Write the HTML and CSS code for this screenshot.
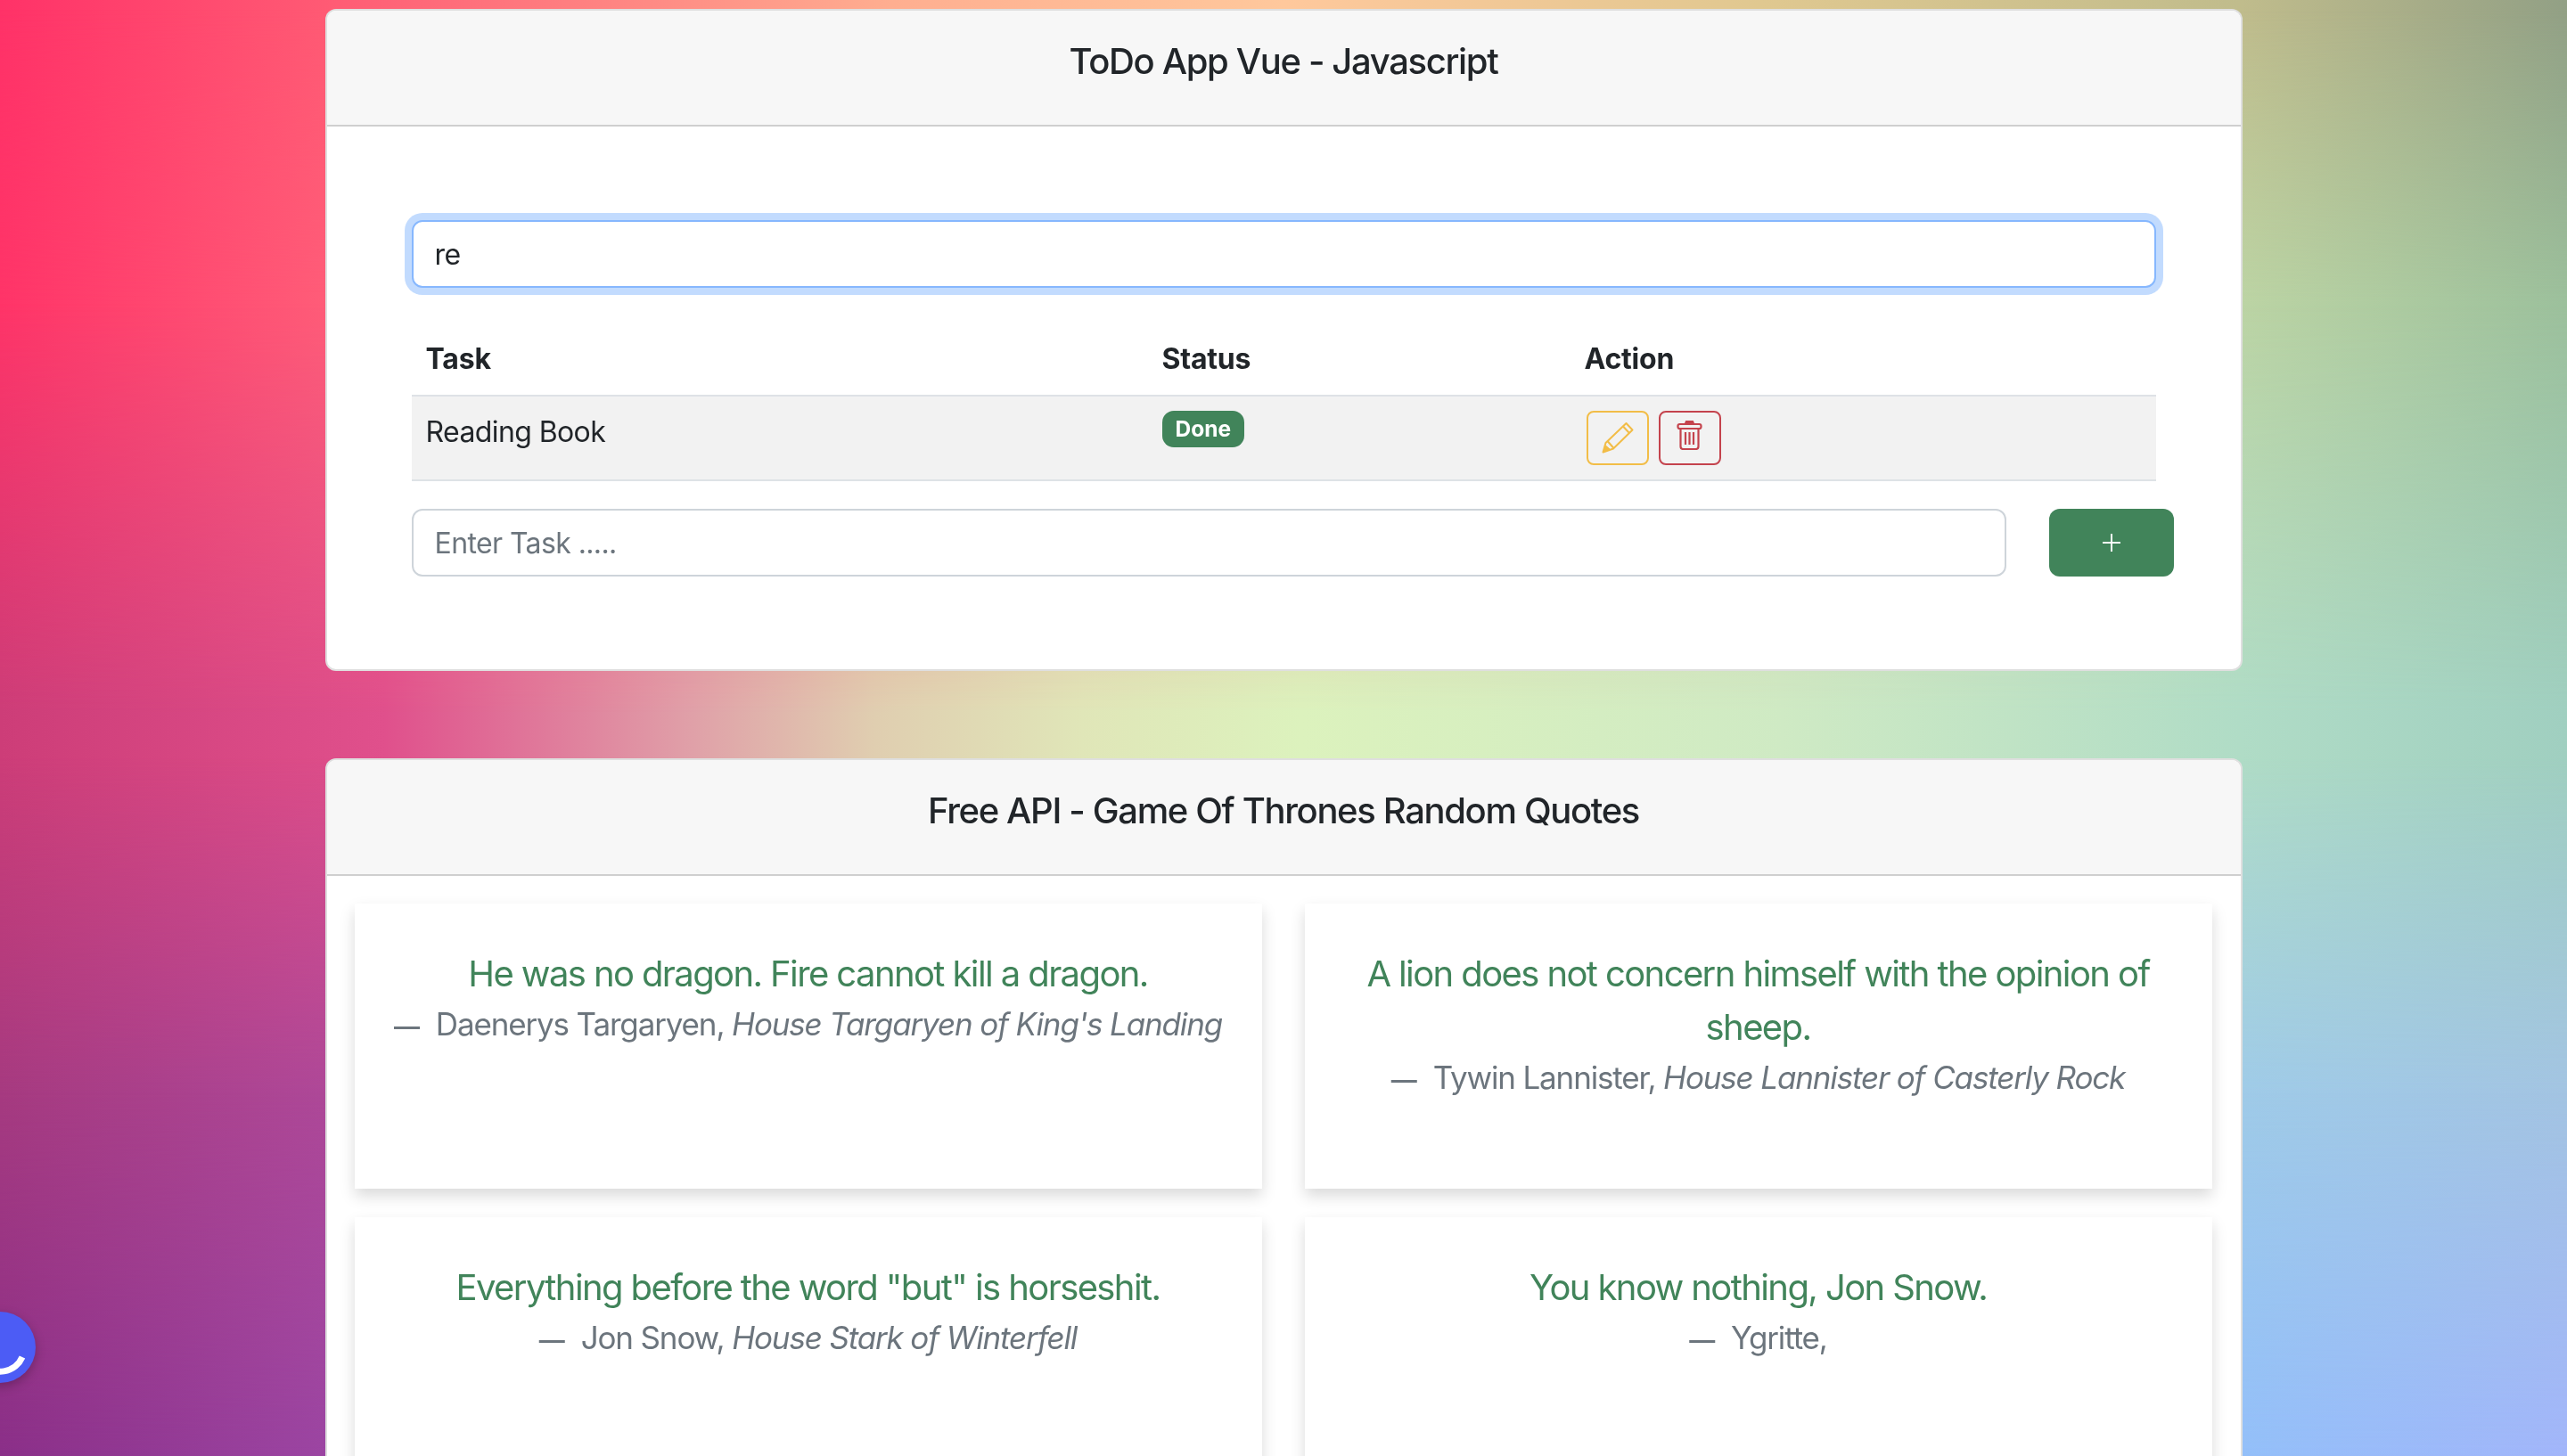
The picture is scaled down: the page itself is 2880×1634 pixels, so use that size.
FILE: index.html
```html
<!DOCTYPE html>
<html lang="en">
<head>
<meta charset="utf-8">
<title>ToDo App Vue</title>
<link rel="stylesheet" href="styles.css">
</head>
<body>
<div class="backdrop">
  <div class="band band-top"></div>
  <div class="band band-upper"></div>
  <div class="band band-middle"></div>
  <div class="band band-lower"></div>
  <div class="band band-bottom"></div>
</div>
<main class="page">
  <section class="card todo-card">
    <header class="card-header">ToDo App Vue - Javascript</header>
    <div class="todo-body">
      <input class="field field-focus" type="text" value="re">
      <table class="tasks">
        <thead>
          <tr><th class="col-task">Task</th><th class="col-status">Status</th><th>Action</th></tr>
        </thead>
        <tbody>
          <tr>
            <td>Reading Book</td>
            <td><span class="badge">Done</span></td>
            <td>
              <div class="actions">
                <button class="icon-btn edit" type="button" aria-label="Edit">
                  <svg viewBox="0 0 36 36" class="icon" fill="none" stroke="currentColor" stroke-width="2" stroke-linejoin="round"><path d="M1.500 34.500 4.500 24 27.500 2 34.500 9.500 13 30.500z"/><path d="M24 5.500 31 13"/><path d="M6.500 22 13.500 30"/><path d="M1.500 34.500 4.500 27 9 31z" fill="currentColor" stroke-width="1"/></svg>
                </button>
                <button class="icon-btn del" type="button" aria-label="Delete">
                  <svg viewBox="0 0 29 33" class="icon trash" fill="none" stroke="currentColor" stroke-width="2.200"><path d="M10 3.500 11 1h7l1 2.500z" fill="currentColor"/><rect x="1.500" y="4" width="26" height="5" rx="2"/><path d="M4.500 9v20a3 3 0 0 0 3 3h14a3 3 0 0 0 3-3V9"/><path d="M10 13v14M14.500 13v14M19 13v14"/></svg>
                </button>
              </div>
            </td>
          </tr>
        </tbody>
      </table>
      <div class="add-row">
        <input class="field" type="text" placeholder="Enter Task .....">
        <button class="add-btn" type="button" aria-label="Add"><svg viewBox="0 0 20 20" class="plus" fill="none" stroke="currentColor" stroke-width="2"><path d="M10 0v20M0 10h20"/></svg></button>
      </div>
    </div>
  </section>

  <section class="card quotes-card">
    <header class="card-header">Free API - Game Of Thrones Random Quotes</header>
    <div class="quotes">
      <figure class="quote"><blockquote>He was no dragon. Fire cannot kill a dragon.</blockquote><figcaption><span class="dash">—</span>Daenerys Targaryen, <cite>House Targaryen of King's Landing</cite></figcaption></figure>
      <figure class="quote"><blockquote>A lion does not concern himself with the opinion of sheep.</blockquote><figcaption><span class="dash">—</span>Tywin Lannister, <cite>House Lannister of Casterly Rock</cite></figcaption></figure>
      <figure class="quote"><blockquote>Everything before the word "but" is horseshit.</blockquote><figcaption><span class="dash">—</span>Jon Snow, <cite>House Stark of Winterfell</cite></figcaption></figure>
      <figure class="quote"><blockquote>You know nothing, Jon Snow.</blockquote><figcaption><span class="dash">—</span>Ygritte,</figcaption></figure>
    </div>
  </section>
</main>
<div class="fab"><svg viewBox="0 0 80 80" class="fab-arc"><path d="M65 51A27 27 0 0 1 20 58" fill="none" stroke="#fff" stroke-width="7"/></svg></div>
</body>
</html>
```
FILE: styles.css
```css
* { box-sizing: border-box; }
html, body { height: 100%; }
body {
  margin: 0;
  overflow: hidden;
  font-family: Inter, "Liberation Sans", sans-serif;
  font-size: 32px;
  line-height: 1.5;
  letter-spacing: -.6px;
  color: #212529;
}
.backdrop { position: fixed; inset: 0; z-index: -1; }
.band { position: absolute; inset: 0; }
.band-top { background: linear-gradient(90deg, #ff3268 0, #ff5a74 364px, #ffae90 1000px, #ffc89c 1440px, #e0c890 1975px, #c0bc8c 2514px, #92a085 2880px); }
.band-upper {
  background: linear-gradient(90deg, #ff3468 0, #ff5c78 364px, #bcd4a4 2514px, #9cc09c 2880px);
  -webkit-mask-image: linear-gradient(180deg, transparent 10px, #000 340px);
  mask-image: linear-gradient(180deg, transparent 10px, #000 340px);
}
.band-middle {
  background: linear-gradient(90deg, #cd3d78 0, #e0508c 432px, #e0a0a8 775px, #e0ceb0 981px, #e0e6b8 1214px, #dcf2bd 1461px, #cfeac4 2000px, #b0dcc6 2514px, #a0cfc0 2880px);
  -webkit-mask-image: linear-gradient(180deg, transparent 340px, #000 800px);
  mask-image: linear-gradient(180deg, transparent 340px, #000 800px);
}
.band-lower {
  background: linear-gradient(90deg, #a63a80 0, #ae4898 364px, #9fcbe8 2514px, #a3c4e2 2880px);
  -webkit-mask-image: linear-gradient(180deg, transparent 850px, #000 1225px);
  mask-image: linear-gradient(180deg, transparent 850px, #000 1225px);
}
.band-bottom {
  background: linear-gradient(90deg, #8a2f88 0, #9b45a2 364px, #93bff9 2514px, #a2b5fa 2880px);
  -webkit-mask-image: linear-gradient(180deg, transparent 1225px, #000 1634px);
  mask-image: linear-gradient(180deg, transparent 1225px, #000 1634px);
}
.page { width: 2151px; margin: 10px auto 0; display: flex; flex-direction: column; gap: 98px; }
.card { background: #fff; border: 2px solid rgba(0,0,0,.125); border-radius: 12px; background-clip: border-box; overflow: hidden; }
.card-header { height: 130px; display: flex; align-items: center; justify-content: center; padding-bottom: 14px; background: #f7f7f7; border-bottom: 2px solid #cfcfcf; font-size: 40px; font-weight: 500; line-height: 1.2; letter-spacing: -1.35px; }
.todo-body { padding: 105px 95px 104px 95px; }
.field { display: block; width: 100%; height: 76px; padding: 12px 24px; font: inherit; letter-spacing: -.6px; color: #212529; background: #fff; border: 2px solid #ced4da; border-radius: 12px; outline: 0; }
.field::placeholder { color: #6c757d; }
.field-focus { border-color: #86b7fe; box-shadow: 0 0 0 8px rgba(13,110,253,.25); margin-bottom: 40px; }
.tasks { width: 100%; border-collapse: collapse; table-layout: fixed; }
.tasks th, .tasks td { padding: 16px; text-align: left; vertical-align: top; border-bottom: 2px solid #dee2e6; }
.tasks th { font-weight: 700; letter-spacing: -.2px; }
.tasks tbody tr { background: #f2f2f2; }
.col-task { width: 826px; }
.col-status { width: 474px; }
.badge { display: inline-block; padding: 8px 15px; font-size: 24.5px; font-weight: 700; line-height: 1; letter-spacing: 0; color: #fff; background: #41845a; border-radius: 13px; vertical-align: 12px; }
.actions { display: flex; gap: 11px; margin-left: 2px; }
.icon-btn { display: flex; align-items: center; justify-content: center; width: 70px; height: 61px; padding: 0; background: transparent; border: 2px solid currentColor; border-radius: 8px; }
.edit { color: #f2bd47; }
.del { color: #c4434d; }
.icon { width: 36px; height: 36px; display: block; margin-top: -2px; }
.trash { width: 29px; height: 33px; margin-top: -6px; }
.add-row { display: flex; gap: 48px; margin-top: 31px; margin-right: -21px; }
.add-row .field { width: 1789px; flex: none; }
.add-btn { flex: none; display: flex; align-items: center; justify-content: center; width: 140px; height: 76px; padding: 0; background: #41845a; color: #fff; border: 0; border-radius: 12px; }
.plus { width: 20px; height: 20px; display: block; }
.quotes { display: grid; grid-template-columns: 1018px 1018px; gap: 32px 48px; padding: 31px 31px 0; }
.quote { margin: 0; height: 320px; padding: 49px 32px; text-align: center; background: #fff; box-shadow: 0 8px 16px rgba(0,0,0,.15); }
.quote blockquote { margin: 0; font-size: 40px; line-height: 1.5; color: #41845a; letter-spacing: -1.6px; }
.quote figcaption { color: #6c757d; font-size: 35px; line-height: 1.5; letter-spacing: -1.15px; }
.quote cite { font-style: italic; }
.dash { font-size: 29px; font-weight: 600; margin-right: 19px; }
.fab { position: fixed; left: -40px; top: 1472px; width: 80px; height: 80px; border-radius: 50%; background: #4c5cf5; box-shadow: 0 4px 12px rgba(0,0,0,.25); }
.fab-arc { width: 80px; height: 80px; display: block; }
```
